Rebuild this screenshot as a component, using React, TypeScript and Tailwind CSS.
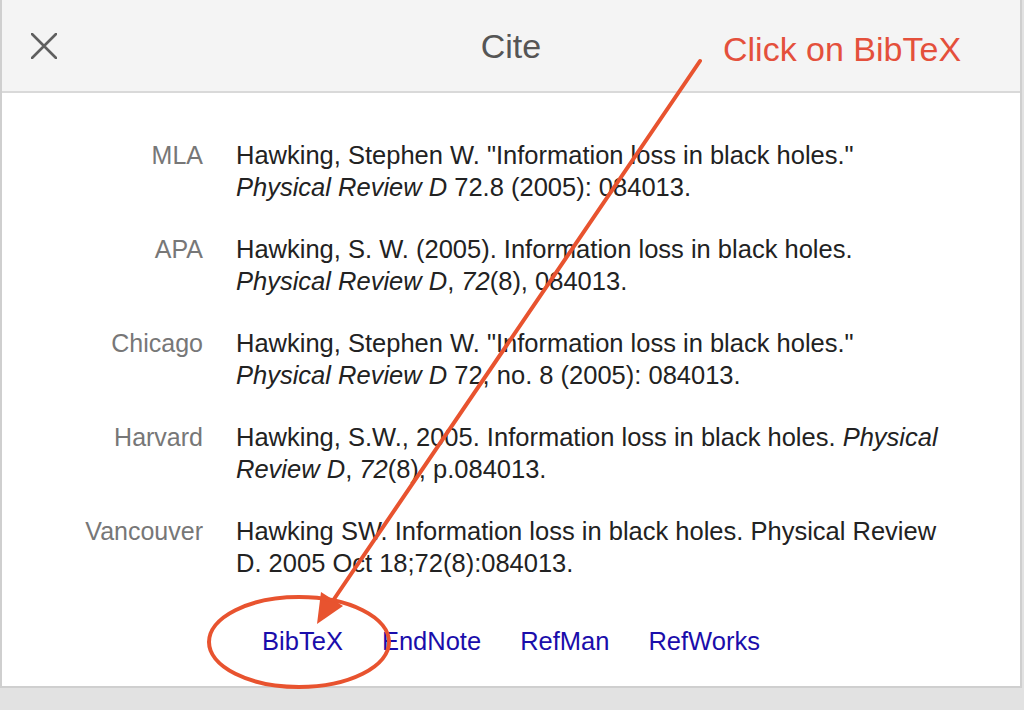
import React from "react";

interface Citation {
  label: string;
  body: React.ReactNode;
}

const citations: Citation[] = [
  {
    label: "MLA",
    body: (
      <>
        Hawking, Stephen W. "Information loss in black holes."{" "}
        <i>Physical Review D</i> 72.8 (2005): 084013.
      </>
    ),
  },
  {
    label: "APA",
    body: (
      <>
        Hawking, S. W. (2005). Information loss in black holes.{" "}
        <i>Physical Review D</i>, <i>72</i>(8), 084013.
      </>
    ),
  },
  {
    label: "Chicago",
    body: (
      <>
        Hawking, Stephen W. "Information loss in black holes."{" "}
        <i>Physical Review D</i> 72, no. 8 (2005): 084013.
      </>
    ),
  },
  {
    label: "Harvard",
    body: (
      <>
        Hawking, S.W., 2005. Information loss in black holes.{" "}
        <i>Physical Review D</i>, <i>72</i>(8), p.084013.
      </>
    ),
  },
  {
    label: "Vancouver",
    body: (
      <>
        Hawking SW. Information loss in black holes. Physical Review D. 2005
        Oct 18;72(8):084013.
      </>
    ),
  },
];

const exportLinks = ["BibTeX", "EndNote", "RefMan", "RefWorks"];

function CloseIcon() {
  return (
    <svg width="26" height="26" viewBox="0 0 26 26" className="text-[#5f5f5f]">
      <path
        d="M1 1 L25 25 M25 1 L1 25"
        stroke="currentColor"
        strokeWidth="2.6"
        strokeLinecap="round"
        fill="none"
      />
    </svg>
  );
}

function Annotation() {
  return (
    <div className="pointer-events-none absolute inset-0">
      <span className="absolute left-[723px] top-[29px] text-[34px] leading-[40px] text-[#e4503c]">
        Click on BibTeX
      </span>
      <svg width="1024" height="710" className="absolute left-0 top-0">
        <line
          x1="700"
          y1="61"
          x2="330"
          y2="605"
          stroke="#e8532f"
          strokeWidth="4"
          strokeLinecap="round"
        />
        <polygon points="317,624 321,592 343,606" fill="#e8532f" />
        <ellipse
          cx="299"
          cy="642"
          rx="90"
          ry="45"
          fill="none"
          stroke="#e8532f"
          strokeWidth="4"
        />
      </svg>
    </div>
  );
}

export default function App() {
  return (
    <div className="relative h-[710px] w-[1024px] overflow-hidden bg-[#e2e2e2] font-['Liberation_Sans',Arial,sans-serif]">
      <div className="flex h-[688px] w-[1022px] flex-col border-x-2 border-b-2 border-[#cfcfcf] bg-white">
        <div className="relative flex h-[93px] shrink-0 items-center justify-center border-b-2 border-[#d9d9d9] bg-[#f4f4f4]">
          <button type="button" className="absolute left-[29px] top-[33px]">
            <CloseIcon />
          </button>
          <span className="text-[34px] leading-[40px] text-[#555555]">Cite</span>
        </div>

        <div className="flex flex-col gap-[30px] pl-[59px] pr-[75px] pt-[46px]">
          {citations.map((c) => (
            <div key={c.label} className="grid grid-cols-[142px_1fr] gap-x-[33px]">
              <span className="text-right text-[25px] leading-[32px] text-[#777777]">
                {c.label}
              </span>
              <span className="text-[25.5px] leading-[32px] text-[#222222]">
                {c.body}
              </span>
            </div>
          ))}
        </div>

        <div className="mt-[46px] flex justify-center gap-[39px]">
          {exportLinks.map((l) => (
            <a key={l} href="#" className="text-[25.5px] leading-[32px] text-[#1a0dab]">
              {l}
            </a>
          ))}
        </div>
      </div>
      <Annotation />
    </div>
  );
}
